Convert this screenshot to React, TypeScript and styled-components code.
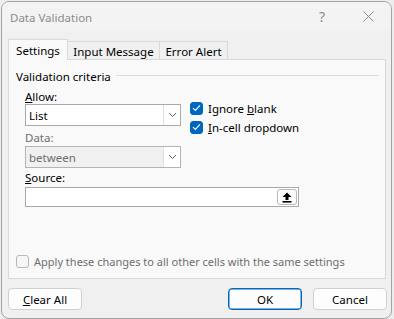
import React from "react";
import styled, { createGlobalStyle } from "styled-components";

const FONT = `"Noto Sans", "Open Sans", sans-serif`;
const FS = "11px";

const Global = createGlobalStyle`
  html, body { margin: 0; padding: 0; background: #ededed; }
  body { font-family: ${FONT}; font-size: ${FS}; color: #000; }
  * { box-sizing: border-box; }
`;

const Window = styled.div`
  margin: 1px 0 0 1px;
  width: 391px;
  height: 318px;
  border: 1px solid #a3a3a3;
  border-radius: 8px;
  overflow: hidden;
  background: #f0f0f0;
  display: flex;
  flex-direction: column;
`;

const TitleBar = styled.div`
  height: 29px;
  background: #f3f3f3;
  display: flex;
  align-items: center;
  padding-left: 8px;
  flex-shrink: 0;
`;

const Title = styled.div`
  color: #8b8b8b;
  font-size: 11.5px;
  flex: 1;
  padding-top: 1px;
`;

const TitleButton = styled.div<{ $w: number }>`
  width: ${(p) => p.$w}px;
  height: 29px;
  display: flex;
  align-items: center;
  justify-content: center;
  color: #8b8b8b;
  font-size: 14px;
`;

const Body = styled.div`
  flex: 1;
  padding: 8px 4px 0 6px;
  display: flex;
  flex-direction: column;
`;

const TabRow = styled.div`
  display: flex;
  align-items: flex-end;
  height: 21px;
  margin-bottom: -1px;
  position: relative;
  z-index: 1;
`;

const Tab = styled.div<{ $active?: boolean; $w: number }>`
  width: ${(p) => p.$w}px;
  height: ${(p) => (p.$active ? 21 : 19)}px;
  border: 1px solid #d9d9d9;
  border-bottom: ${(p) => (p.$active ? "none" : "1px solid #d9d9d9")};
  border-left: ${(p) => (p.$active ? "1px solid #d9d9d9" : "none")};
  background: ${(p) => (p.$active ? "#f9f9f9" : "#f0f0f0")};
  display: flex;
  align-items: center;
  justify-content: center;
  font-size: 11.5px;
  padding-top: ${(p) => (p.$active ? 0 : 1)}px;
`;

const Panel = styled.div`
  width: 378px;
  height: 220px;
  background: #f9f9f9;
  border: 1px solid #d9d9d9;
  padding: 0 0 0 7px;
  display: flex;
  flex-direction: column;
`;

const Legend = styled.div`
  display: flex;
  align-items: center;
  gap: 5px;
  height: 16px;
  margin-top: 8px;
  margin-right: 6px;
  font-size: 11.5px;
`;

const LegendLine = styled.div`
  flex: 1;
  height: 1px;
  background: #dcdcdc;
  margin-top: -1px;
`;

const Criteria = styled.div`
  margin-left: 9px;
  display: flex;
  flex-direction: column;
`;

const TopRow = styled.div`
  display: flex;
  gap: 9px;
`;

const LeftCol = styled.div`
  width: 156px;
  display: flex;
  flex-direction: column;
`;

const Label = styled.div<{ $disabled?: boolean; $mt: number }>`
  height: 14px;
  line-height: 14px;
  margin-top: ${(p) => p.$mt}px;
  color: ${(p) => (p.$disabled ? "#6e6e6e" : "#000")};
  font-size: 11.5px;
`;

const Select = styled.div<{ $disabled?: boolean; $mt: number }>`
  margin-top: ${(p) => p.$mt}px;
  height: 22px;
  border: 1px solid ${(p) => (p.$disabled ? "#b4b4b4" : "#a9a9a9")};
  background: ${(p) => (p.$disabled ? "#f0f0f0" : "#fff")};
  display: flex;
  align-items: stretch;
`;

const SelectValue = styled.div<{ $disabled?: boolean }>`
  flex: 1;
  display: flex;
  align-items: center;
  padding-left: 3px;
  color: ${(p) => (p.$disabled ? "#6e6e6e" : "#000")};
  font-size: 11.5px;
`;

const SelectArrow = styled.div`
  width: 17px;
  border-left: 1px solid #dedede;
  background: #fff;
  display: flex;
  align-items: center;
  justify-content: center;
`;

const RightCol = styled.div`
  padding-top: 17px;
  display: flex;
  flex-direction: column;
  gap: 5px;
`;

const CheckRow = styled.div`
  display: flex;
  align-items: center;
  gap: 5px;
  height: 14px;
  font-size: 11.5px;
`;

const Box = styled.div<{ $checked?: boolean }>`
  width: 13px;
  height: 13px;
  border-radius: 3px;
  background: ${(p) => (p.$checked ? "#0067c0" : "#f6f6f6")};
  border: 1px solid ${(p) => (p.$checked ? "#0067c0" : "#b8b8b8")};
  display: flex;
  align-items: center;
  justify-content: center;
  flex-shrink: 0;
`;

const SourceInput = styled.div`
  margin-top: 2px;
  width: 274px;
  height: 20px;
  border: 1px solid #a9a9a9;
  background: #fff;
  display: flex;
  justify-content: flex-end;
  align-items: center;
  padding-right: 1px;
`;

const RefButton = styled.div`
  width: 20px;
  height: 16px;
  border: 1px solid #b9b9b9;
  border-radius: 3px;
  background: #fdfdfd;
  display: flex;
  align-items: center;
  justify-content: center;
`;

const ApplyRow = styled.div`
  margin-top: auto;
  margin-bottom: 9px;
  display: flex;
  align-items: center;
  gap: 5px;
  color: #6e6e6e;
  font-size: 11px;
`;

const ButtonRow = styled.div`
  display: flex;
  margin-top: 9px;
  gap: 11px;
`;

const Button = styled.div<{ $primary?: boolean; $push?: boolean }>`
  width: 74px;
  height: 22px;
  border-radius: 4px;
  background: #fdfdfd;
  border: 1px solid ${(p) => (p.$primary ? "#0067c0" : "#d0d0d0")};
  box-shadow: ${(p) => (p.$primary ? "inset 0 0 0 0.5px #0067c0" : "none")};
  display: flex;
  align-items: center;
  justify-content: center;
  font-size: 11.5px;
  margin-left: ${(p) => (p.$push ? "auto" : "0")};
`;

const Chevron = ({ color = "#606060" }: { color?: string }) => (
  <svg width="9" height="6" viewBox="0 0 9 6">
    <path d="M1 1 L4.5 4.5 L8 1" fill="none" stroke={color} strokeWidth="1" />
  </svg>
);

const Check = () => (
  <svg width="9" height="8" viewBox="0 0 9 8">
    <path d="M1 4.2 L3.4 6.4 L8 1.4" fill="none" stroke="#fff" strokeWidth="1.1" />
  </svg>
);

const UploadIcon = () => (
  <svg width="10" height="11" viewBox="0 0 10 11">
    <path d="M5 0.5 L9.5 5 L6.5 5 L6.5 8 L3.5 8 L3.5 5 L0.5 5 Z" fill="#000" />
    <rect x="0.5" y="9" width="9" height="1.6" fill="#000" />
  </svg>
);

const CloseIcon = () => (
  <svg width="11" height="11" viewBox="0 0 11 11">
    <path d="M0.5 0.5 L10.5 10.5 M10.5 0.5 L0.5 10.5" stroke="#8b8b8b" strokeWidth="1" />
  </svg>
);

export default function App() {
  return (
    <>
      <Global />
      <Window>
        <TitleBar>
          <Title>Data Validation</Title>
          <TitleButton $w={46}>?</TitleButton>
          <TitleButton $w={46}>
            <CloseIcon />
          </TitleButton>
        </TitleBar>
        <Body>
          <TabRow>
            <Tab $active $w={60}>Settings</Tab>
            <Tab $w={92}>Input Message</Tab>
            <Tab $w={68}>Error Alert</Tab>
          </TabRow>
          <Panel>
            <Legend>
              Validation criteria
              <LegendLine />
            </Legend>
            <Criteria>
              <TopRow>
                <LeftCol>
                  <Label $mt={6}>
                    <u>A</u>llow:
                  </Label>
                  <Select $mt={0}>
                    <SelectValue>List</SelectValue>
                    <SelectArrow>
                      <Chevron />
                    </SelectArrow>
                  </Select>
                  <Label $disabled $mt={5}>Data:</Label>
                  <Select $disabled $mt={1}>
                    <SelectValue $disabled>between</SelectValue>
                    <SelectArrow>
                      <Chevron />
                    </SelectArrow>
                  </Select>
                </LeftCol>
                <RightCol>
                  <CheckRow>
                    <Box $checked>
                      <Check />
                    </Box>
                    <span>
                      Ignore <u>b</u>lank
                    </span>
                  </CheckRow>
                  <CheckRow>
                    <Box $checked>
                      <Check />
                    </Box>
                    <span>
                      <u>I</u>n-cell dropdown
                    </span>
                  </CheckRow>
                </RightCol>
              </TopRow>
              <Label $mt={3}>
                <u>S</u>ource:
              </Label>
              <SourceInput>
                <RefButton>
                  <UploadIcon />
                </RefButton>
              </SourceInput>
            </Criteria>
            <ApplyRow>
              <Box />
              <span>Apply these changes to all other cells with the same settings</span>
            </ApplyRow>
          </Panel>
          <ButtonRow>
            <Button>
              <span>
                <u>C</u>lear All
              </span>
            </Button>
            <Button $primary $push>OK</Button>
            <Button>Cancel</Button>
          </ButtonRow>
        </Body>
      </Window>
    </>
  );
}
